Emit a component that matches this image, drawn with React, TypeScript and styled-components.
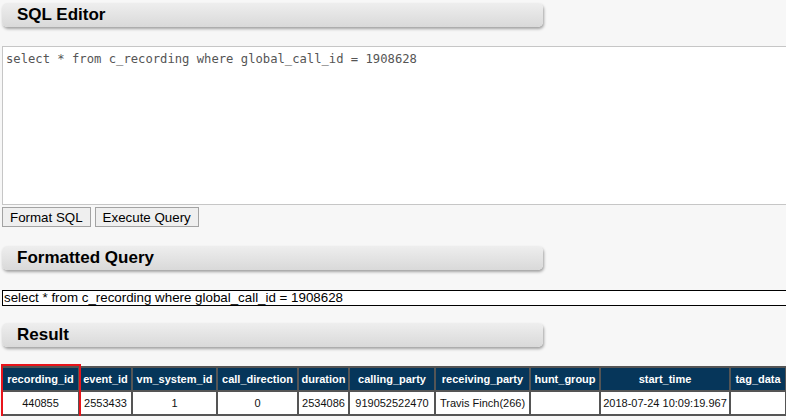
import React from 'react';
import styled, { createGlobalStyle } from 'styled-components';

const query = 'select * from c_recording where global_call_id = 1908628';

const columns = [
  { name: 'recording_id', width: 77, value: '440855' },
  { name: 'event_id', width: 53, value: '2553433' },
  { name: 'vm_system_id', width: 85, value: '1' },
  { name: 'call_direction', width: 81, value: '0' },
  { name: 'duration', width: 51, value: '2534086' },
  { name: 'calling_party', width: 86, value: '919052522470' },
  { name: 'receiving_party', width: 95, value: 'Travis Finch(266)' },
  { name: 'hunt_group', width: 70, value: '' },
  { name: 'start_time', width: 130, value: '2018-07-24 10:09:19.967' },
  { name: 'tag_data', width: 56, value: '' },
];

export default function App() {
  return (
    <Page>
      <GlobalStyle />
      <SectionBar>SQL Editor</SectionBar>
      <Editor defaultValue={query} spellCheck={false} />
      <Buttons>
        <Button>Format SQL</Button>
        <Button>Execute Query</Button>
      </Buttons>
      <SectionBar $top={19}>Formatted Query</SectionBar>
      <Formatted>{query}</Formatted>
      <SectionBar $top={17}>Result</SectionBar>
      <TableWrap>
        <Table>
          <colgroup>
            {columns.map((c) => (
              <col key={c.name} style={{ width: c.width }} />
            ))}
          </colgroup>
          <thead>
            <tr>
              {columns.map((c) => (
                <Th key={c.name}>{c.name}</Th>
              ))}
            </tr>
          </thead>
          <tbody>
            <tr>
              {columns.map((c) => (
                <Td key={c.name}>{c.value}</Td>
              ))}
            </tr>
          </tbody>
        </Table>
        <Highlight />
      </TableWrap>
    </Page>
  );
}

const GlobalStyle = createGlobalStyle`
  html, body {
    margin: 0;
    background: #f7f7f7;
    overflow: hidden;
  }
`;

const Page = styled.div`
  padding: 3px 0 0 2px;
  font-family: 'Liberation Sans', Arial, sans-serif;
  width: 900px;
`;

const SectionBar = styled.div<{ $top?: number }>`
  margin-top: ${({ $top }) => $top || 0}px;
  width: 526px;
  height: 24px;
  padding-left: 15px;
  display: flex;
  align-items: center;
  font-size: 17px;
  font-weight: bold;
  color: #000;
  border-radius: 5px;
  background: linear-gradient(#eeeeee, #d9d9d9);
  box-shadow: 1px 2px 3px rgba(0, 0, 0, 0.35);
`;

const Editor = styled.textarea`
  display: block;
  margin-top: 19px;
  width: 820px;
  height: 159px;
  box-sizing: border-box;
  padding: 5px 3px;
  border: 1px solid #c6c6c6;
  background: #fff;
  color: #555;
  font-family: 'DejaVu Sans Mono', 'Liberation Mono', monospace;
  font-size: 12.2px;
  line-height: 15px;
  resize: none;
  outline: none;
`;

const Buttons = styled.div`
  display: flex;
  gap: 4px;
  margin-top: 2px;
`;

const Button = styled.button`
  height: 20px;
  padding: 0 7px;
  font-family: 'Liberation Sans', Arial, sans-serif;
  font-size: 13.33px;
  color: #000;
  background: #efefef;
  border: 1px solid #a3a3a3;
  border-radius: 0;
`;

const Formatted = styled.div`
  margin-top: 20px;
  width: 820px;
  height: 14px;
  border: 1px solid #000;
  background: #fff;
  font-size: 13.33px;
  line-height: 14px;
  padding-left: 1px;
  color: #000;
`;

const TableWrap = styled.div`
  position: relative;
  margin-top: 19px;
  margin-left: -1px;
`;

const Table = styled.table`
  border-collapse: collapse;
  table-layout: fixed;
  width: 784px;
  font-size: 11px;
  border: 2px solid #555;
`;

const Th = styled.th`
  height: 22px;
  padding: 0 2px;
  background: #06365a;
  color: #fff;
  font-weight: bold;
  text-align: center;
  white-space: nowrap;
  border: 2px solid #555;
`;

const Td = styled.td`
  height: 22px;
  padding: 0 2px;
  background: #fff;
  color: #111;
  text-align: center;
  white-space: nowrap;
  border: 2px solid #555;
`;

const Highlight = styled.div`
  position: absolute;
  left: 0;
  top: -2px;
  width: 76px;
  height: 50px;
  border: 2px solid #e8141b;
  pointer-events: none;
`;
